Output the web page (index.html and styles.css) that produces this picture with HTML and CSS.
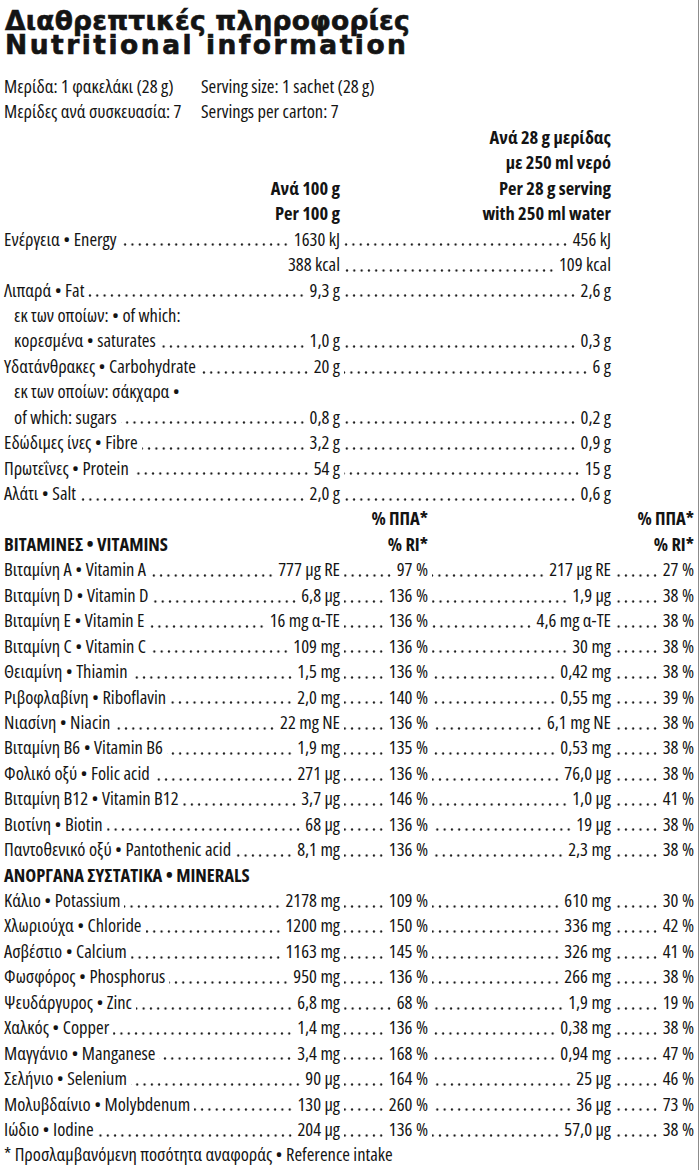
FILE: index.html
```html
<!DOCTYPE html>
<html lang="el">

<head>
	<meta charset="UTF-8">
	<meta name="viewport" content="width=device-width, initial-scale=1.0">
	<title>Διαθρεπτικές πληροφορίες • Nutritional information</title>
	<link rel="stylesheet" href="styles.css">
</head>

<body>
	<div class="sheet">
		<h1><span class="gr">Διαθρεπτικές πληροφορίες</span><span class="en">Nutritional information</span></h1>

		<div class="serving">
			<span>Μερίδα: 1 φακελάκι (28 g)</span><span>Serving size: 1 sachet (28 g)</span>
			<span>Μερίδες ανά συσκευασία: 7</span><span>Servings per carton: 7</span>
		</div>

		<div class="table">
			<div class="row head"><span class="c3">Ανά 28 g μερίδας</span></div>
			<div class="row head"><span class="c3">με 250 ml νερό</span></div>
			<div class="row head"><span class="c1">Ανά 100 g</span><span class="c3">Per 28 g serving</span></div>
			<div class="row head"><span class="c1">Per 100 g</span><span class="c3">with 250 ml water</span></div>

			<div class="row"><span class="c1">Ενέργεια • Energy<i></i><b>1630 kJ</b></span><span class="c23"><i></i><b>456 kJ</b></span></div>
			<div class="row"><span class="c1"><i class="none"></i><b>388 kcal</b></span><span class="c23"><i></i><b>109 kcal</b></span></div>
			<div class="row"><span class="c1">Λιπαρά • Fat<i></i><b>9,3 g</b></span><span class="c23"><i></i><b>2,6 g</b></span></div>
			<div class="row"><span class="c1 sub">εκ των οποίων: • of which:</span></div>
			<div class="row"><span class="c1 sub">κορεσμένα • saturates<i></i><b>1,0 g</b></span><span class="c23"><i></i><b>0,3 g</b></span></div>
			<div class="row"><span class="c1">Υδατάνθρακες • Carbohydrate<i></i><b>20 g</b></span><span class="c23"><i></i><b>6 g</b></span></div>
			<div class="row"><span class="c1 sub">εκ των οποίων: σάκχαρα •</span></div>
			<div class="row"><span class="c1 sub">of which: sugars<i></i><b>0,8 g</b></span><span class="c23"><i></i><b>0,2 g</b></span></div>
			<div class="row"><span class="c1">Εδώδιμες ίνες • Fibre<i></i><b>3,2 g</b></span><span class="c23"><i></i><b>0,9 g</b></span></div>
			<div class="row"><span class="c1">Πρωτεΐνες • Protein<i></i><b>54 g</b></span><span class="c23"><i></i><b>15 g</b></span></div>
			<div class="row"><span class="c1">Αλάτι • Salt<i></i><b>2,0 g</b></span><span class="c23"><i></i><b>0,6 g</b></span></div>

			<div class="row head"><span class="c2">% ΠΠΑ*</span><span class="c4">% ΠΠΑ*</span></div>
			<div class="row head"><span class="c1 left">ΒΙΤΑΜΙΝΕΣ • VITAMINS</span><span class="c2">% RI*</span><span class="c4">% RI*</span></div>
			<div class="row"><span class="c1">Βιταμίνη Α • Vitamin A<i></i><b>777 μg RE</b></span><span class="c2"><i></i><b>97 %</b></span><span class="c3"><i></i><b>217 μg RE</b></span><span class="c4"><i></i><b>27 %</b></span></div>
			<div class="row"><span class="c1">Βιταμίνη D • Vitamin D<i></i><b>6,8 μg</b></span><span class="c2"><i></i><b>136 %</b></span><span class="c3"><i></i><b>1,9 μg</b></span><span class="c4"><i></i><b>38 %</b></span></div>
			<div class="row"><span class="c1">Βιταμίνη Ε • Vitamin E<i></i><b>16 mg α-TE</b></span><span class="c2"><i></i><b>136 %</b></span><span class="c3"><i></i><b>4,6 mg α-TE</b></span><span class="c4"><i></i><b>38 %</b></span></div>
			<div class="row"><span class="c1">Βιταμίνη C • Vitamin C<i></i><b>109 mg</b></span><span class="c2"><i></i><b>136 %</b></span><span class="c3"><i></i><b>30 mg</b></span><span class="c4"><i></i><b>38 %</b></span></div>
			<div class="row"><span class="c1">Θειαμίνη • Thiamin<i></i><b>1,5 mg</b></span><span class="c2"><i></i><b>136 %</b></span><span class="c3"><i></i><b>0,42 mg</b></span><span class="c4"><i></i><b>38 %</b></span></div>
			<div class="row"><span class="c1">Ριβοφλαβίνη • Riboflavin<i></i><b>2,0 mg</b></span><span class="c2"><i></i><b>140 %</b></span><span class="c3"><i></i><b>0,55 mg</b></span><span class="c4"><i></i><b>39 %</b></span></div>
			<div class="row"><span class="c1">Νιασίνη • Niacin<i></i><b>22 mg NE</b></span><span class="c2"><i></i><b>136 %</b></span><span class="c3"><i></i><b>6,1 mg NE</b></span><span class="c4"><i></i><b>38 %</b></span></div>
			<div class="row"><span class="c1">Βιταμίνη Β6 • Vitamin B6<i></i><b>1,9 mg</b></span><span class="c2"><i></i><b>135 %</b></span><span class="c3"><i></i><b>0,53 mg</b></span><span class="c4"><i></i><b>38 %</b></span></div>
			<div class="row"><span class="c1">Φολικό οξύ • Folic acid<i></i><b>271 μg</b></span><span class="c2"><i></i><b>136 %</b></span><span class="c3"><i></i><b>76,0 μg</b></span><span class="c4"><i></i><b>38 %</b></span></div>
			<div class="row"><span class="c1">Βιταμίνη Β12 • Vitamin B12<i></i><b>3,7 μg</b></span><span class="c2"><i></i><b>146 %</b></span><span class="c3"><i></i><b>1,0 μg</b></span><span class="c4"><i></i><b>41 %</b></span></div>
			<div class="row"><span class="c1">Βιοτίνη • Biotin<i></i><b>68 μg</b></span><span class="c2"><i></i><b>136 %</b></span><span class="c3"><i></i><b>19 μg</b></span><span class="c4"><i></i><b>38 %</b></span></div>
			<div class="row"><span class="c1">Παντοθενικό οξύ • Pantothenic acid<i></i><b>8,1 mg</b></span><span class="c2"><i></i><b>136 %</b></span><span class="c3"><i></i><b>2,3 mg</b></span><span class="c4"><i></i><b>38 %</b></span></div>

			<div class="row head"><span class="c1 left">ΑΝΟΡΓΑΝΑ ΣΥΣΤΑΤΙΚΑ • MINERALS</span></div>
			<div class="row"><span class="c1">Κάλιο • Potassium<i></i><b>2178 mg</b></span><span class="c2"><i></i><b>109 %</b></span><span class="c3"><i></i><b>610 mg</b></span><span class="c4"><i></i><b>30 %</b></span></div>
			<div class="row"><span class="c1">Χλωριούχα • Chloride<i></i><b>1200 mg</b></span><span class="c2"><i></i><b>150 %</b></span><span class="c3"><i></i><b>336 mg</b></span><span class="c4"><i></i><b>42 %</b></span></div>
			<div class="row"><span class="c1">Ασβέστιο • Calcium<i></i><b>1163 mg</b></span><span class="c2"><i></i><b>145 %</b></span><span class="c3"><i></i><b>326 mg</b></span><span class="c4"><i></i><b>41 %</b></span></div>
			<div class="row"><span class="c1">Φωσφόρος • Phosphorus<i></i><b>950 mg</b></span><span class="c2"><i></i><b>136 %</b></span><span class="c3"><i></i><b>266 mg</b></span><span class="c4"><i></i><b>38 %</b></span></div>
			<div class="row"><span class="c1">Ψευδάργυρος • Zinc<i></i><b>6,8 mg</b></span><span class="c2"><i></i><b>68 %</b></span><span class="c3"><i></i><b>1,9 mg</b></span><span class="c4"><i></i><b>19 %</b></span></div>
			<div class="row"><span class="c1">Χαλκός • Copper<i></i><b>1,4 mg</b></span><span class="c2"><i></i><b>136 %</b></span><span class="c3"><i></i><b>0,38 mg</b></span><span class="c4"><i></i><b>38 %</b></span></div>
			<div class="row"><span class="c1">Μαγγάνιο • Manganese<i></i><b>3,4 mg</b></span><span class="c2"><i></i><b>168 %</b></span><span class="c3"><i></i><b>0,94 mg</b></span><span class="c4"><i></i><b>47 %</b></span></div>
			<div class="row"><span class="c1">Σελήνιο • Selenium<i></i><b>90 μg</b></span><span class="c2"><i></i><b>164 %</b></span><span class="c3"><i></i><b>25 μg</b></span><span class="c4"><i></i><b>46 %</b></span></div>
			<div class="row"><span class="c1">Μολυβδαίνιο • Molybdenum<i></i><b>130 μg</b></span><span class="c2"><i></i><b>260 %</b></span><span class="c3"><i></i><b>36 μg</b></span><span class="c4"><i></i><b>73 %</b></span></div>
			<div class="row"><span class="c1">Ιώδιο • Iodine<i></i><b>204 μg</b></span><span class="c2"><i></i><b>136 %</b></span><span class="c3"><i></i><b>57,0 μg</b></span><span class="c4"><i></i><b>38 %</b></span></div>
		</div>

		<p class="note">* Προσλαμβανόμενη ποσότητα αναφοράς • Reference intake</p>
	</div>
</body>

</html>
```
FILE: styles.css
```css
body {
	margin: 0;
	color: #141414;
	background: #fff;
	font-family: "Open Sans", "Noto Sans", sans-serif;
	font-stretch: 75%;
	font-size: 18.5px;
	line-height: 25.43px;
}

.sheet {
	box-sizing: border-box;
	width: 699px;
	min-height: 100vh;
	padding: 10px 0 0 4px;
	border-right: 1px solid #8c8c8c;
}

h1 {
	display: flex;
	flex-direction: column;
	gap: 2px;
	margin: 0 0 18px 1px;
	font-family: "DejaVu Sans", sans-serif;
	font-stretch: normal;
	font-size: 26.5px;
	font-weight: 700;
	line-height: 21.5px;
	-webkit-text-stroke: 0.6px #141414;
}

h1 .gr {
	letter-spacing: 0.2px;
}

h1 .en {
	letter-spacing: 2.5px;
}

.serving {
	display: grid;
	grid-template-columns: 197px auto;
}

.table {
	display: grid;
}

.row {
	display: grid;
	grid-template-columns: 336px 88px 183px 83px;
	white-space: nowrap;
}

.row > span {
	display: flex;
	justify-content: flex-end;
	min-width: 0;
}

.row.head {
	font-weight: 700;
}

.c1 {
	grid-column: 1;
}

.c2 {
	grid-column: 2;
}

.c3 {
	grid-column: 3;
}

.c4 {
	grid-column: 4;
}

.c23 {
	grid-column: 2 / 4;
}

.row > .left {
	justify-content: flex-start;
}

.row > .sub {
	justify-content: flex-start;
	padding-left: 10px;
}

.row b {
	font-weight: 400;
}

/* dot leaders */
.row i {
	flex: 1;
	min-width: 0;
	margin: 0 4px 0 4px;
	background: radial-gradient(circle, #1c1c1c 1.05px, transparent 1.45px) right 0 top 17.8px / 7.3px 3.4px repeat-x;
}

.row i.none {
	background: none;
}

.note {
	margin: 0;
}
```
